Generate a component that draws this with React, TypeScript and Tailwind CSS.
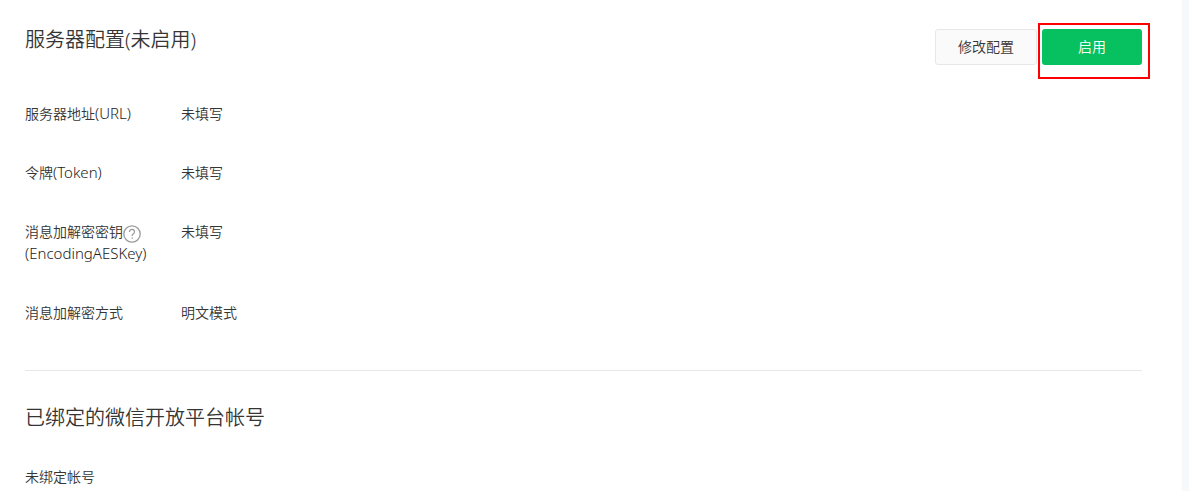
import type { ReactNode } from "react";

type Setting = { label: ReactNode; value: string };

function HelpIcon() {
  return (
    <svg viewBox="0 0 18 18" className="h-[18px] w-[18px]" fill="none" aria-hidden="true">
      <circle cx="9" cy="9" r="8.2" stroke="#9a9a9a" strokeWidth="1.3" />
      <path
        d="M6.4 7.1C6.4 5.4 7.5 4.4 9 4.4s2.5 1 2.5 2.3c0 1-.5 1.6-1.3 2.2-.8.6-1.1 1.1-1.1 2"
        stroke="#9a9a9a"
        strokeWidth="1.2"
      />
      <circle cx="9.1" cy="13" r="0.8" fill="#9a9a9a" />
    </svg>
  );
}

function Term({ children }: { children: ReactNode }) {
  return <span className="text-[15px] leading-5 text-[#222222]">({children})</span>;
}

const settings: Setting[] = [
  { label: <>服务器地址<Term>URL</Term></>, value: "未填写" },
  { label: <>令牌<Term>Token</Term></>, value: "未填写" },
  {
    label: (
      <>
        <span className="flex items-center">
          消息加解密密钥
          <button type="button" aria-label="帮助" className="-my-1 mt-0 shrink-0">
            <HelpIcon />
          </button>
        </span>
        <Term>EncodingAESKey</Term>
      </>
    ),
    value: "未填写",
  },
  { label: "消息加解密方式", value: "明文模式" },
];

export default function App() {
  return (
    <div className="min-h-screen bg-[#f6f8f9] pr-[7px] font-['Noto_Sans','Noto_Sans_CJK_SC',sans-serif] text-sm leading-[22px] font-[350] text-[#353535]">
      <main className="min-h-screen bg-white pr-10 pl-[25px]">
        <section className="border-b border-[#e7e7eb] pb-[46px]">
          <header className="flex items-start justify-between pt-[23px]">
            <h2 className="text-xl font-[350] leading-[34px]">服务器配置(未启用)</h2>
            <div className="flex gap-[5px] pt-1.5">
              <button
                type="button"
                className="h-9 w-[102px] rounded-[3px] border border-[#e4e8eb] bg-[#fafafa]"
              >
                修改配置
              </button>
              <div className="relative">
                <button type="button" className="h-9 w-[100px] rounded-[3px] bg-[#07c160] text-white">
                  启用
                </button>
                <div className="pointer-events-none absolute -top-1.5 -right-2 -bottom-3.5 -left-1 border-2 border-[#ff0000]" />
              </div>
            </div>
          </header>
          <dl className="flex flex-col gap-[37px] pt-[38px]">
            {settings.map((item, i) => (
              <div key={i} className="flex">
                <dt className="w-[156px] shrink-0">{item.label}</dt>
                <dd>{item.value}</dd>
              </div>
            ))}
          </dl>
        </section>
        <section className="pt-[31px]">
          <h2 className="text-xl font-[350] leading-8">已绑定的微信开放平台帐号</h2>
          <p className="pt-8">未绑定帐号</p>
        </section>
      </main>
    </div>
  );
}
